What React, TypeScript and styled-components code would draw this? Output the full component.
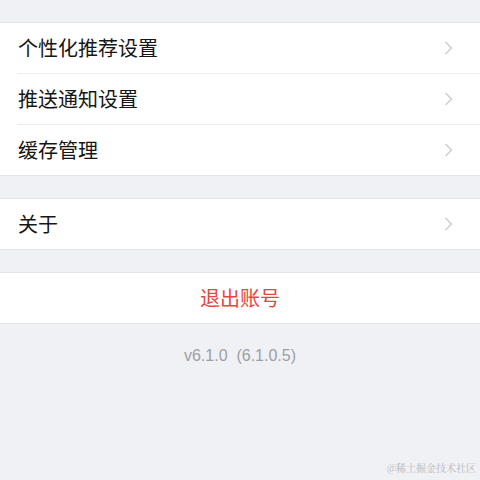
import React from "react";
import styled, { createGlobalStyle } from "styled-components";

const Global = createGlobalStyle`
  html, body { margin: 0; padding: 0; background: #eff1f4; }
  body { font-family: "Noto Sans CJK SC", "Liberation Sans", sans-serif; }
`;

const Page = styled.div`
  width: 480px;
  height: 480px;
  background: #eff1f4;
  display: flex;
  flex-direction: column;
  padding-top: 22px;
  gap: 22px;
  box-sizing: border-box;
  position: relative;
  overflow: hidden;
`;

const Group = styled.div`
  background: #ffffff;
  border-top: 1px solid #e3e4e6;
  border-bottom: 1px solid #e3e4e6;
  display: flex;
  flex-direction: column;
`;

const Row = styled.div<{ $last?: boolean }>`
  height: 50px;
  margin-left: 17px;
  padding-right: 26px;
  display: flex;
  align-items: center;
  justify-content: space-between;
  border-bottom: ${(p) => (p.$last ? "none" : "1px solid #ededee")};
`;

const Label = styled.span`
  font-family: "Noto Sans CJK SC", sans-serif;
  font-size: 20px;
  color: #161616;
  padding-left: 1px;
  line-height: 1;
`;

const Chevron = styled.svg`
  width: 10px;
  height: 14px;
  display: block;
`;

const LogoutRow = styled.div`
  height: 50px;
  display: flex;
  align-items: center;
  justify-content: center;
  font-family: "Noto Sans CJK SC", sans-serif;
  font-size: 20px;
  color: #e7463e;
  line-height: 1;
`;

const Version = styled.div`
  margin-top: 1px;
  text-align: center;
  font-family: "Liberation Sans", Arial, sans-serif;
  font-size: 16px;
  color: #9d9fa4;
  white-space: pre;
`;

const Watermark = styled.div`
  position: absolute;
  right: 4px;
  bottom: 5px;
  font-family: "Noto Serif CJK SC", "Noto Sans CJK SC", serif;
  font-size: 10px;
  color: #b4b7bc;
`;

const Arrow = () => (
  <Chevron viewBox="0 0 10 14">
    <path d="M2 1.5 L7.5 7 L2 12.5" fill="none" stroke="#cfd0d2" strokeWidth="1.7" strokeLinecap="round" strokeLinejoin="round" />
  </Chevron>
);

const items = ["个性化推荐设置", "推送通知设置", "缓存管理"];

export default function App() {
  return (
    <>
      <Global />
      <Page>
        <Group>
          {items.map((t, i) => (
            <Row key={t} $last={i === items.length - 1}>
              <Label>{t}</Label>
              <Arrow />
            </Row>
          ))}
        </Group>
        <Group>
          <Row $last>
            <Label>关于</Label>
            <Arrow />
          </Row>
        </Group>
        <Group>
          <LogoutRow>退出账号</LogoutRow>
        </Group>
        <Version>{"v6.1.0  (6.1.0.5)"}</Version>
        <Watermark>@稀土掘金技术社区</Watermark>
      </Page>
    </>
  );
}
